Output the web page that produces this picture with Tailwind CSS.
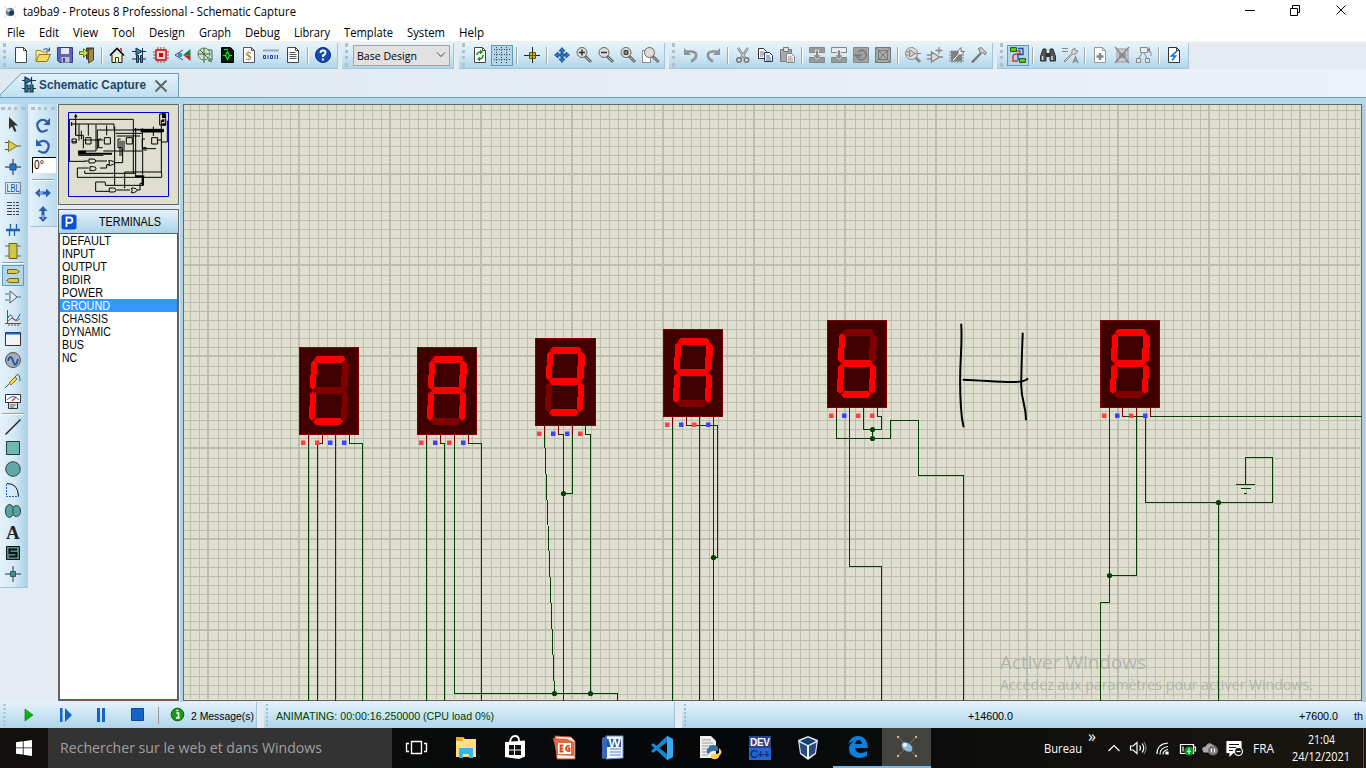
<!DOCTYPE html>
<html lang="fr">
<head>
<meta charset="utf-8">
<title>ta9ba9 - Proteus 8 Professional - Schematic Capture</title>
<script src="https://cdn.jsdelivr.net/npm/@tailwindcss/browser@4"></script>
</head>
<body class="w-[1366px] h-[768px] overflow-hidden bg-[#e4ebf2] font-['Open_Sans','Noto_Sans',sans-serif] text-xs text-black">
<div class="flex flex-col w-full h-full">

  <!-- Title bar -->
  <header class="flex h-6 items-center bg-white shrink-0 pb-px">
    <svg class="w-4 h-4 ml-[2px] mr-[5px]" viewBox="0 0 16 16"><path d="M2 2l12 12M14 2L2 14" stroke="#ddd2c0"/><circle cx="8" cy="8" r="4.3" fill="#5f7f99"/><circle cx="9.5" cy="9" r="2.5" fill="#263746"/><circle cx="6.5" cy="6.3" r="1.8" fill="#b5cedf"/></svg>
    <span data-w="273">ta9ba9 - Proteus 8 Professional - Schematic Capture</span>
    <svg class="ml-auto w-[126px] h-6 shrink-0" viewBox="1240 0 126 24" fill="none" stroke="#000"><path d="M1245 10.500h10M1290.500 8.500h7v7h-7zM1292.500 8v-2.500h7v7h-2M1336.500 5.500l9 9M1345.500 5.500l-9 9" /></svg>
  </header>
  <nav class="flex h-[17px] items-center bg-white shrink-0 pl-[7px] whitespace-nowrap" id="menu"></nav>
  <div class="h-[2px] bg-[#f0f0f0] shrink-0"></div>

  <!-- Toolbars -->
  <div class="flex h-[26px] shrink-0" id="toolbars"></div>

  <!-- Tab strip -->
  <div class="h-[28px] shrink-0 flex">
    <svg class="w-[1366px] h-[28px]" viewBox="0 69 1366 28"><defs><linearGradient id="tg" x2="0" y2="1"><stop stop-color="#e4f2fb"/><stop offset="1" stop-color="#bfdff0"/></linearGradient><linearGradient id="bgw"><stop stop-color="#e1e9f0"/><stop offset="1" stop-color="#ebf2f9"/></linearGradient></defs><rect y="69" width="1366" height="28" fill="url(#bgw)"/><path d="M0 97v-2l21-21.500h157.500V97" fill="url(#tg)" stroke="#6a9ebd"/>
      <g stroke="#17344d" stroke-width="1.200"><path d="M22 80.500h14M31.500 77v7M22 88.500h14"/><path d="M25 77v7l6-3.500z" fill="#2879ad"/><path d="M25 85h3v7h-3zM30 85h3v7h-3z" fill="#2879ad"/></g>
      <path d="M155.500 80.500l11 11M166.500 80.500l-11 11" stroke="#666" stroke-width="2"/>
      <text x="39" y="89" textLength="107" lengthAdjust="spacingAndGlyphs" font-family="Liberation Sans" font-weight="bold" font-size="12" fill="#1d4766">Schematic Capture</text></svg>
  </div>
  <div class="h-[7px] shrink-0 border-t border-[#6a9ebd] bg-[#b5d8eb]"></div>

  <!-- Work area -->
  <main class="flex h-[598px] shrink-0">
    <aside class="w-[28px] h-[484px] ml-0 bg-linear-to-r from-[#e4f2fb] via-[#d5e9f5] to-[#a9cfe6] border-b border-[#a3c5da] flex flex-col items-center pr-[2px] shrink-0" id="modes"></aside>
    <div class="w-[2px]"></div>
    <aside class="w-[27px] h-[123px] bg-linear-to-r from-[#e4f2fb] to-[#b9daed] border-b border-[#a3c5da] flex flex-col items-center shrink-0 pr-[2px]" id="rotation"></aside>
    <div class="w-[123px] ml-[1px] flex flex-col shrink-0 -mr-[1px]">
      <svg class="w-[121px] h-[101px] shrink-0" viewBox="174 12 363 303"><path d="M175.500 13.500h360v300h-360z" fill="#dfdfcf" stroke="#666" stroke-width="3"/><path d="M205.500 37.500h300v252h-300z" fill="none" stroke="#0000c8" stroke-width="3"/>
        <g fill="none" stroke="#000" stroke-width="3"><path d="M208 58H400V88H490M212 72H342V88M227 42v64M223 50h9M215 66v12M208 58V184h48M227 72V106h23V145M237 72V122M244 92V118M252 120h58M265 72v35M288 74V153H236V166H310M292 90h190M292 90v58M320 76v30M344 80V256M347 100h80M350 108h70M360 122v46M366 122v46M372 122v28M400 88V220M407 84V232M427 90V150H440M427 96h60M427 84v12M460 80v28M470 120h15M484 60V218M502 62V126H484M310 153H428V224M428 146h40M232 204h34M232 204V232H485V218M254 212V220H408M253 183h12M288 183h33M300 204h20V194h8M345 188h23V146M374 216V265M374 216h112M287 246h28M287 246V274h40M316 246v10h114V228M350 270h40M412 270h8V250h10"/>
        <path d="M257 113h16v19h-16zM313 113h18v19h-18zM379 113h18v19h-18zM455 113h18v19h-18zM296 117v26h12M296 117h8M354 117v26h12M354 117h8M427 117v26h12M427 117h8M216 117h13v12h-13zM216 125h13"/>
        <path d="M267 177h12q8 0 8 6t-8 6h-12zM270 200h10q8 0 8 6t-8 6h-10zM328 264h12q8 0 8 6t-8 6h-12zM326 182h6q10 1 12 6-3 7-12 8h-6q5-7 0-14zM394 264h6q10 1 12 6-3 7-12 8h-6q5-7 0-14z"/><path d="M479 42h18v33h-18z"/></g>
        <path d="M486 40h11v14h-11zM486 58h7v8h-7zM487 70h10v7h-10zM224 45h6v6h-6zM234 152h24v9h-24zM238 158h98v6h-98zM405 226h28v6h-28zM425 230h7v26h-7zM422 88h70v8h-70z"/></svg>
      <div class="h-[4px] shrink-0"></div>
      <div class="w-[121px] h-[492px] shrink-0 border border-[#666] bg-white flex flex-col">
        <div class="h-[23px] shrink-0 flex items-center bg-linear-to-b from-[#e4f2fb] to-[#acd3e8]">
          <svg class="w-4 h-4 ml-[2px]" viewBox="0 0 16 16"><rect x=".500" y=".500" width="15" height="15" rx="2.500" fill="#0b4fd4"/><path d="M5.500 13V3.500h3.200a2.700 2.700 0 0 1 0 5.400H5.500" fill="none" stroke="#fff" stroke-width="1.800"/></svg>
          <span data-w="62" class="ml-[22px] font-['Liberation_Sans',sans-serif] text-xs">TERMINALS</span>
        </div>
        <div class="flex-1 border border-[#1a6fb0] font-['Liberation_Sans',sans-serif] text-xs leading-[13px]" id="terms"></div>
      </div>
    </div>
    <div class="w-[3px] bg-[#b3d3e6] shrink-0"></div>
    <svg class="w-[1179px] h-[597px] shrink-0" viewBox="183 104 1179 597">
      <rect x="183" y="104" width="1179" height="597" fill="#666"/><rect x="184" y="105" width="1177" height="595" fill="#dfdfcf"/>
      <g id="grid" fill="#bcbdad" shape-rendering="crispEdges"></g>
      <g fill="#a9a9a9" fill-opacity=".8" font-family="Open Sans, sans-serif"><text x="1000" y="669" font-size="19" textLength="146" lengthAdjust="spacingAndGlyphs">Activer Windows</text><text x="1000" y="690" font-size="14" textLength="313" lengthAdjust="spacingAndGlyphs">Accédez aux paramètres pour activer Windows.</text></g>
      <g transform="translate(.5 .5)" fill="none" stroke="#004000" shape-rendering="crispEdges">
        <path d="M308 443V700M322 443H317V700M335 443V700M349 443H362V700M426 443V700M440 443H444V700M454 443V693H617V700M468 443H481V700"/>
        <path d="M544 434L554 693M558 434H563V700M572 434V493H563M585 434H590V693M672 425V700M686 425H717V557H713M699 425V700M713 425V700"/>
        <path d="M836 416V438H890V420H918V475H963V700M849 416V566H881V700M863 416V429H881V416H877M872 429V438"/>
        <path d="M1109 416V602H1100V700M1122 416H1145V502H1272V457H1245V484M1136 416V575H1109M1150 416H1361M1218 502V700M1235.500 484H1254.500M1240.500 488H1250.500M1243.500 493H1246.500"/>
      </g>
      <g id="dots" fill="#004000"></g>
      <g id="displays"></g>
      <g fill="none" stroke="#000" stroke-width="2" stroke-linecap="round" stroke-linejoin="round"><path d="M961.200 324.500Q962 335 960.700 360T961 408Q961.500 418 963.500 426.500M963.500 379.700C985 380.500 1005 382.800 1016 382S1025 380 1027.500 379M1022.700 333.500Q1021.500 362 1021.200 385C1021.500 402 1026 405 1026 419.500"/></g>
    </svg>
    <div class="flex-1 bg-[#b0cde1]"></div>
  </main>

  <!-- Status bar -->
  <footer class="flex h-[26px] shrink-0 font-['Liberation_Sans',sans-serif] text-[11.5px] bg-[#e4ebf2] whitespace-nowrap">
    <div class="flex items-center w-[257px] bg-linear-to-b from-[#e4f2fb] to-[#afd5ea] border-r border-[#a3c5da]">
      <svg class="w-[189px] h-[26px]" viewBox="0 702 189 26"><path d="M4.500 704v24" stroke="#a9bccb" stroke-width="2" stroke-dasharray="2 2"/><path d="M25 709v12l8-6z" fill="#10b010" stroke="#098a09" stroke-width=".700"/><g fill="#1764c8"><path d="M60 708h2.500v14H60zM65 708v14l7-7zM97 708h3v14h-3zM102 708h3v14h-3z"/><path d="M131.500 708.500h12v12h-12z" stroke="#0b4a9c"/></g><path d="M158.500 707v17" stroke="#999"/><circle cx="177.500" cy="714.500" r="6.300" fill="#199a12" stroke="#075c05"/><path d="M176.300 713h2.200v5h1.200M176 718h3M176.300 710.500h2" stroke="#fff" stroke-width="1.600" fill="none"/></svg>
      <span data-w="63" class="ml-[2px]">2 Message(s)</span>
    </div>
    <div class="w-[7px]"></div>
    <div class="flex items-center w-[411px] bg-linear-to-b from-[#e4f2fb] to-[#afd5ea] border-r border-[#a3c5da]">
      <i class="block h-[22px] ml-[2px] border-l-2 border-dotted border-[#a9bccb]"></i>
      <span data-w="218" class="ml-[8px] text-[#004000]">ANIMATING: 00:00:16.250000 (CPU load 0%)</span>
    </div>
    <div class="w-[7px]"></div>
    <div class="flex flex-1 items-center bg-linear-to-b from-[#e4f2fb] to-[#afd5ea]">
      <i class="block h-[22px] ml-[2px] border-l-2 border-dotted border-[#a9bccb]"></i>
      <span data-w="45" class="ml-[282px]">+14600.0</span>
      <span data-w="39" class="ml-[286px]">+7600.0</span>
      <span data-w="9" class="ml-[16px] text-[#000080]">th</span>
    </div>
  </footer>

  <!-- Windows taskbar -->
  <div class="flex h-10 shrink-0 items-center bg-linear-to-r from-[#12100d] via-[#050709] to-[#1b1710] text-white whitespace-nowrap">
    <div class="w-12 flex justify-center"><svg class="w-4 h-4" viewBox="0 0 16 16" fill="#fff"><path d="M0 2.300l6.800-1v6.200H0zM7.600 1.200L16 0v7.500H7.600zM0 8.300h6.800v6.300L0 13.700zM7.600 8.300H16V16l-8.400-1.200z"/></svg></div>
    <div class="w-[344px] h-10 bg-[#333] flex items-center pl-[12px] text-[#a0a0a0] text-[14.5px]"><span data-w="262">Rechercher sur le web et dans Windows</span></div>
    <div class="flex h-10" id="apps"></div>
    <div class="flex flex-1 items-center h-10">
      <span data-w="38" class="ml-[113px]">Bureau</span>
      <span class="ml-[6px] mb-[22px] w-[14px] text-[16px]">»</span>
      <svg class="w-[144px] h-6" viewBox="1102 736 144 24" fill="none" stroke="#fff" stroke-width="1.200"><path d="M1108.500 751l5.500-5.500 5.500 5.500"/><path d="M1130.500 746h2.500l4-3.500v11l-4-3.500h-2.500zM1139.500 745.500q2 2.500 0 5M1142 743.500q3.500 4.500 0 9"/><path d="M1144 742q4 6 0 12" stroke="#777"/><path d="M1157 754q0-10 11-11M1160 754.500q0-7 8-8M1163 754.500q0-4 5-5" /><path d="M1166 752h2v2h-2z" fill="#fff"/><path d="M1180.500 744.500h13v9h-13zM1194 747h1.500v4H1194M1183 746.500v5"/><circle cx="1189" cy="751" r="4" fill="#0a9a2a" stroke="#0a9a2a"/><path d="M1189 748v6M1187 751q2 2 4 0" stroke-width="1"/><path d="M1204 752q-3-5 2-5 2-5 6-2 3 0 3 4v3z" fill="#aaa" stroke="#aaa"/><circle cx="1213" cy="750.500" r="4.500" fill="#777" stroke="#777"/><path d="M1211.500 748.500v4M1214.500 748.500v4"/><path d="M1227 741.500h14v11h-8l-3 3v-3h-3z" fill="#fff"/><path d="M1229 744.500h10M1229 747.500h7M1229 750.500h4" stroke="#111"/><circle cx="1238.500" cy="751.500" r="4" fill="#111"/><path d="M1236.500 751.500h4"/></svg>
      <span data-w="21" class="ml-[7px]">FRA</span>
      <div class="flex flex-col items-center ml-[18px] leading-[17px] w-[58px]"><span data-w="27">21:04</span><span data-w="58">24/12/2021</span></div>
      <i class="block ml-auto mr-[2px] h-10 w-px bg-[#555]"></i>
    </div>
  </div>
</div>

<script>
const $ = id => document.getElementById(id);
const doc = (s = '#444', inner = '') => `<path d="M2.500.500h8l3 3v12h-11z" fill="#fff" stroke="${s}"/><path d="M10.500.500v3h3" fill="none" stroke="${s}"/>${inner}`;
const lens = (x, inner) => `<path d="M${9+x} 9l6 6" stroke="#666" stroke-width="3"/><path d="M${10+x} 10l4.500 4.500" stroke="#bbb"/><circle cx="${6+x}" cy="5.500" r="5" fill="#ddd" stroke="#666"/>${inner}`;
const ic = {
  new: doc(),
  open: '<path d="M1 14V3.500h5l1 1.500h5v3" fill="#f5e9a0" stroke="#a58b26"/><path d="M1 14.500l3-7h11.500l-3.500 7z" fill="#f6d95f" stroke="#8d7420"/><path d="M8 3q3-3 6 0M14.500.500V4H11" fill="none" stroke="#2b4f8d"/>',
  save: '<path d="M.500.500h15v15H3l-2.500-2z" fill="#6163b7" stroke="#393b88"/><path d="M4 1h8v6H4z" fill="#e7e7f3"/><path d="M4.500 10h8v5.500h-8z" fill="#bfc0d5"/><path d="M6 11h2v4H6z" fill="#40427e"/>',
  exit: '<path d="M7.500 1h7v11h-7z" fill="#555" stroke="#333"/><path d="M9.500 3l5-2v12l-5 3z" fill="#a38a4a" stroke="#554415"/><path d="M.500 4.500h4v-3L9 6l-4.500 4.500v-3h-4z" fill="#c4dd49" stroke="#668018"/>',
  home: '<path d="M3 8v7.500h10V8" fill="#fff3b3" stroke="#111"/><path d="M1 8.500l7-7 7 7" fill="none" stroke="#000" stroke-width="1.600"/><path d="M12 1v4" fill="none" stroke="#b22" stroke-width="1.500"/><path d="M6.500 15.500v-5h3v5" fill="#fff" stroke="#333"/>',
  schem: '<g stroke="#16304a"><path d="M1 4.500h14M11.500 1v7M1 12h14"/><path d="M5 1v7l6-3.500z" fill="#2f87c6"/><path d="M5.500 8.500h2v7h-2zM9.500 8.500h2v7h-2z" fill="#2f87c6"/></g>',
  pcb: '<path d="M5 0v16M8 0v16M11 0v16M0 5h16M0 8h16M0 11h16" stroke="#c33"/><path d="M3 3h10v10H3z" fill="#f9d9d5" stroke="#b11" stroke-width="1.400"/><path d="M6 6h4v4H6z" fill="#b11"/>',
  vis: '<path d="M8 3L0 8l8 5" fill="none" stroke="#447"/><circle cx="5" cy="8" r="2.300" fill="#39a"/><path d="M8 8l7.500-6v7z" fill="#17823a"/><path d="M8 8l7.500 6V9z" fill="#c22"/>',
  gerb: '<circle cx="7" cy="7" r="6" fill="#cfe1c8" stroke="#587f58"/><path d="M1 7h12M7 1v15M3 3l8 8M11 3h4v10M11 13l4 2" stroke="#3b6a46" fill="none"/><circle cx="13" cy="13" r="2" fill="#5a9a5a"/>',
  design: '<path d="M2.500.500h9l3 3v12h-12z" fill="#051c06" stroke="#000"/><path d="M4 8.500h2.500l2-4 2 4H13M6.500 8.500l2 4 2-4M5 2.500h4" stroke="#1be632" fill="none" stroke-width="1.200"/>',
  bill: doc('#555', '<text x="4.500" y="12.500" font-size="12" font-family="Liberation Serif" fill="#8a7c1a">$</text>'),
  code: '<path d="M0 3.500h16" stroke="#9fa6b6" stroke-width="2"/><path d="M.500 8.500h2v3h-2zM5 8v4M7.500 8.500h2v3h-2zM12 8v4M14.500 8v4" fill="none" stroke="#1b3fae"/>',
  note: doc('#444', '<path d="M4.500 5.500h6M4.500 7.500h7M4.500 9.500h7M4.500 11.500h7" stroke="#555"/>'),
  help: '<circle cx="8" cy="8" r="7.500" fill="#174bb4" stroke="#0d2a66"/><path d="M5.500 6Q5.500 3.500 8 3.500t2.500 2.300Q10.500 7.500 8 8.500V10M8 11.500v2" stroke="#fff" stroke-width="1.900" fill="none"/>',
  refresh: doc('#444', '<path d="M5 8q0-3 4-3M11 8q0 4-4 4" fill="none" stroke="#159415" stroke-width="1.600"/><path d="M8 2.500l3 2.500-3 2.500zM8 9.500L5 12l3 2.500z" fill="#159415"/>'),
  grid: '<path d="M0 2.500h16M0 7.500h16M0 12.500h16M2.500 0v16M7.500 0v16M12.500 0v16" stroke="#333" stroke-dasharray="1 1.500" stroke-opacity=".9"/>',
  origin: '<path d="M0 8.500h16M8.500 0v16" stroke="#222"/><path d="M5.500 5.500h6v6h-6z" fill="#c4b82e" stroke="#5b5410"/><path d="M8.500 5v7M5 8.500h7" stroke="#5b5410"/>',
  pan: '<path d="M8 .500l3 3.500H9v3h3V5l3.500 3-3.500 3V9H9v3h2l-3 3.500L5 12h2V9H4v2L.500 8 4 5v2h3V4H5z" fill="#2a78d0" stroke="#123f86" stroke-width=".800"/>',
  zin: lens(0, '<path d="M3 5.500h6M6 2.500v6" stroke="#333" stroke-width="1.500"/>'),
  zout: lens(0, '<path d="M3 5.500h6" stroke="#333" stroke-width="1.500"/>'),
  zall: lens(0, '<path d="M4 3.500h4v4H4z" fill="#777" stroke="#444"/>'),
  zarea: '<path d="M.500 3.500h8v12h-8z" fill="#fff" stroke="#333" stroke-dasharray="1 1"/>' + lens(1.500, ''),
  undo: '<path d="M4 4.500h4q6 0 5 5-1 3-5 5" fill="none" stroke="#8f9498" stroke-width="2.600"/><path d="M1 1v7h7z" fill="#8f9498"/>',
  redo: '<path d="M12 4.500H8q-6 0-5 5 1 3 5 5" fill="none" stroke="#8f9498" stroke-width="2.600"/><path d="M15 1v7H8z" fill="#8f9498"/>',
  cut: '<path d="M3 1l7 10M13 1L6 11" stroke="#777" stroke-width="2.200"/><path d="M3 1l7 10M13 1L6 11" stroke="#eee" stroke-width=".800"/><circle cx="4" cy="13" r="2.300" fill="none" stroke="#777" stroke-width="1.500"/><circle cx="11.500" cy="13" r="2.300" fill="none" stroke="#777" stroke-width="1.500"/>',
  copy: '<path d="M1.500 1.500h5l3 3v7h-8z" fill="#fff" stroke="#333"/><path d="M3 5h4M3 7h4M3 9h3" stroke="#777"/><path d="M7.500 5.500h5l3 3v6h-8z" fill="#fff" stroke="#223459"/><path d="M9 9h4M9 11h5M9 13h5" stroke="#567"/>',
  paste: '<path d="M1.500 2.500h11v12h-11z" fill="#aaa" stroke="#777"/><path d="M4.500.500h5v4h-5z" fill="#ddd" stroke="#777"/><path d="M7.500 6.500h5l3 3v6h-8z" fill="#eee" stroke="#888"/><path d="M9 10h4M9 12h5M9 14h5" stroke="#999"/>',
  bcopy: '<path d="M.500.500h15v5H.500zM.500 10.500h15v5H.500z" fill="#999" stroke="#888"/><path d="M6.500 3h3v5h3L8 12.500 3.500 8h3z" fill="#888" stroke="#eee" stroke-width=".800"/>',
  bmove: '<path d="M.500.500h15v5H.500z" fill="#e6eef4" stroke="#888"/><path d="M.500 10.500h15v5H.500z" fill="#999" stroke="#888"/><path d="M6.500 3h3v5h3L8 12.500 3.500 8h3z" fill="#888" stroke="#eee" stroke-width=".800"/>',
  brot: '<path d="M.500.500h15v15H.500z" fill="#a3a3a3" stroke="#888"/><path d="M5 5q4-4 7 0t-1 7-6-1M2 8h6L5 11z" fill="none" stroke="#777" stroke-width="1.400"/>',
  bdel: '<path d="M.500.500h15v15H.500z" fill="#aaa" stroke="#777"/><path d="M1 1l14 14M15 1L1 15M3.500 3.500h9v9h-9z" fill="none" stroke="#777"/>',
  pick: '<path d="M10 10l5 5" stroke="#888" stroke-width="3"/><circle cx="6.500" cy="6.500" r="6" fill="#ddd" stroke="#888"/><path d="M4.500 3v7l6-3.500zM1 5h3M1 8h3M10 6.500h6" fill="#ccc" stroke="#888"/>',
  make: '<path d="M4.500 5v10l8-5zM0 8h4M0 12h4M12 10h4M12 0v7M8.500 3.500h7" fill="#ddd" stroke="#888" stroke-width="1.300"/>',
  pack: '<path d="M3 3v13M6 3v13M9 3v13M12 3v13M0 5h15M0 8h15M0 11h15M0 14h15" stroke="#888"/><path d="M2 4h11v10H2z" fill="#808080"/><path d="M3 13l6-6V3.500L12 .500v4h3.500l-3 3.500H10l-5.500 6.500z" fill="#eee" stroke="#777"/>',
  hammer: '<path d="M1 15.500L10 6" stroke="#777" stroke-width="2.500"/><path d="M7.500 1.500l3-1 2.500 3 2.500 2-1.500 2.500-2-2.500-2.500 1z" fill="#ccc" stroke="#777"/>',
  auto: '<path d="M3 10q0-3 4-3h3V4H7M3 9v5h5" fill="none" stroke="#d32" stroke-width="1.400"/><path d="M8 1.500h5v6H8v5h3" fill="none" stroke="#1a55b5" stroke-width="1.400"/><path d="M.500.500h6v4h-6zM9.500 11.500h6v4h-6z" fill="#5fc021" stroke="#246010"/>',
  find: '<path d="M1 8l2-6h3v12H.500V9zM15 8l-2-6h-3v12h5.500V9z" fill="#555" stroke="#333"/><path d="M6 6h4v4H6z" fill="#333"/><path d="M2.500 9v4M12 9v4" stroke="#ddd" stroke-width="1.500"/>',
  prop: '<path d="M0 1.500h6M0 4.500h6" stroke="#888"/><path d="M2 14l8-8V3l3-2v3h3l-2 3h-3l-8 8z" fill="#ddd" stroke="#888"/><path d="M11 16l2.500-6 2.500 6M12 14h3" stroke="#888" fill="none" stroke-width="1.400"/>',
  addsh: doc('#999', '<path d="M8 6v7M4.500 9.500h7" stroke="#888" stroke-width="2.500"/>'),
  delsh: '<path d="M3 2h11v13H3z" fill="#ccc" stroke="#999"/><path d="M5 6h7v5H5z" fill="#999"/><path d="M1 0l14 16M15 0L1 16" stroke="#888" stroke-width="1.400"/>',
  hier: '<path d="M4.500.500h7v5h-7zM.500 11.500h4v4h-4zM9.500 11.500h4v4h-4zM6 6l-3 5M8 6l3 5M11 3q5 0 4 6" fill="#eee" fill-opacity=".5" stroke="#888"/><path d="M11 3l3-3v6z" fill="#888"/>',
  elec: doc('#333', '<path d="M11 4L5.500 9h4L6 13.500" fill="none" stroke="#1670c8" stroke-width="1.600"/>'),
  sel: '<path d="M4 0v12l3-2.500L9.500 15l2-1L9 8.500h4z" fill="#333"/>',
  comp: '<path d="M0 4.500h4M0 11.500h4M12 8h4" stroke="#555"/><path d="M3.500 2.500v11L12 8z" fill="#d6cc51" stroke="#7f772a"/>',
  junc: '<path d="M0 8h16M8 0v16" stroke="#123"/><path d="M5 5h6v6H5z" fill="#2876c8" stroke="#124a80"/>',
  lbl: '<path d="M.500 2.500h15v11H.500z" fill="none" stroke="#333" stroke-dasharray="1 1"/><text x="1.500" y="11.500" font-size="10" textLength="13" lengthAdjust="spacingAndGlyphs" font-family="Liberation Sans" fill="#0a4fa0">LBL</text>',
  script: '<path d="M2 1.500h12M2 4.500h12M2 7.500h12M2 10.500h12M2 13.500h12" stroke="#444" stroke-dasharray="5 1 2 1"/>',
  bus: '<path d="M1 8h14" stroke="#1764b8" stroke-width="2.500"/><path d="M5.500 2v6M11.500 2v6M4.500 8v6M9.500 8v6" stroke="#1764b8" stroke-width="1.300" fill="none"/>',
  sub: '<path d="M0 3h16M0 13h16" stroke="#666"/><path d="M4 .500h8v15H4z" fill="#cfc648" stroke="#67601a"/>',
  term: '<path d="M2.500 1.500h9l3 2-3 2h-9zM13.500 10.500H4.500l-3 2 3 2h9z" fill="#d6cb46" stroke="#6b641e"/>',
  pin: '<path d="M0 5h4M0 11h4M12 8h4" stroke="#2b8a8a"/><path d="M5 2v12l7-6z" fill="#e8f3f5" stroke="#555"/>',
  graph: '<path d="M2.500 0v14M0 13.500h16M4 13v3M7 13v3M10 13v3M13 13v3" stroke="#555"/><path d="M3 8q2-6 5 0t7-4" fill="none" stroke="#1764c8"/><path d="M3 11l4-3 4 3 4-2" fill="none" stroke="#c42"/>',
  tape: '<path d="M.500 1.500h15v13H.500z" fill="#f3f3f3" stroke="#333"/><path d="M1 2.500h14" stroke="#1764c8" stroke-width="2"/>',
  gen: '<circle cx="8" cy="8" r="7.500" fill="#a7adb6" stroke="#555"/><path d="M3 9q2.500-8 5 0t5-2" fill="none" stroke="#1654a8" stroke-width="1.800"/>',
  probe: '<path d="M0 15l4-4M10 4q4-6 5 2v2" fill="none" stroke="#555"/><path d="M4 10l6-6 2 2-6 6z" fill="#eddf3a" stroke="#777421"/>',
  meter: '<path d="M.500.500h15v8H.500z" fill="#fff" stroke="#333"/><path d="M2 6q6-7 12 0" fill="none" stroke="#1764c8"/><path d="M7 7l4-4" stroke="#d32" stroke-width="1.500"/><path d="M3.500 8.500h9v6h-9z" fill="#ddd" stroke="#333"/><path d="M5 11h5M5 13h4" stroke="#666"/><circle cx="10.500" cy="11" r="1" fill="#dc0"/>',
  line: '<path d="M.500 15.500l15-15" stroke="#222" stroke-width="1.400"/>',
  box: '<path d="M1.500 1.500h13v13h-13z" fill="#72b6b2" stroke="#223f3e"/>',
  circ: '<circle cx="8" cy="8" r="7.300" fill="#62a7a3" stroke="#2f4b4a"/>',
  arc: '<path d="M1.500 2v12.500H14" fill="none" stroke="#1764c8" stroke-dasharray="2 1"/><path d="M2 1.500q11 0 11.500 12.500" fill="none" stroke="#111"/>',
  path: '<path d="M8 4.500Q7 1.500 4.500 1.500 .500 2 .500 8t4 6.500Q7 14 8 11.500q1 2 3.500 2 4-.500 4-5.500t-4-5.500Q9 2.500 8 4.500z" fill="#5ca39f" stroke="#284341"/><path d="M8 5v6" stroke="#284341"/>',
  text: '<text x="1" y="14.500" font-size="19" font-weight="bold" font-family="Liberation Serif" fill="#222">A</text>',
  sym: '<path d="M1.500 1.500h13v13h-13z" fill="#4a958b" stroke="#111"/><path d="M12 4.500H4.500V8h7v3.500H4" fill="none" stroke="#111" stroke-width="2"/>',
  mark: '<path d="M0 8h16M8 0v16" stroke="#333"/><path d="M5.500 5.500h5v5h-5z" fill="#3f8f91" stroke="#2b5d5e"/>',
  cw: '<path d="M12 4.500Q8 1.500 4.500 4T3 11t5.500 3.500 4-2" fill="none" stroke="#2d5eac" stroke-width="2.200"/><path d="M15 1v7H8.500z" fill="#2d5eac"/>',
  ccw: '<path d="M4 4.500Q8 1.500 11.500 4T13 11t-5.500 3.500-4-2" fill="none" stroke="#2d5eac" stroke-width="2.200"/><path d="M1 1v7h6.500z" fill="#2d5eac"/>',
  hflip: '<path d="M0 8l5-4.500v3h6v-3L16 8l-5 4.500v-3H5v3z" fill="#2d5eac"/><path d="M5 7h3v2H5L3 8z" fill="#7ea3da"/>',
  vflip: '<path d="M8 0l4.500 5h-3v6h3L8 16l-4.500-5h3V5h-3z" fill="#2d5eac"/><path d="M7 9h2v3l-1 1.500L7 12z" fill="#7ea3da"/>'
};
const svg = n => `<svg class="w-4 h-4 overflow-visible" viewBox="0 0 16 16">${ic[n]}</svg>`;
const on = 'border border-[#5f9bbd] bg-[#b5d6e9]';

$('menu').innerHTML = [['File',18],['Edit',20],['View',25],['Tool',23],['Design',36],['Graph',32],['Debug',35],['Library',36],['Template',49],['System',38],['Help',25]]
  .map(([t, w]) => `<span data-w="${w}">${t}</span><i class="w-[14px] shrink-0"></i>`).join('');

const slot = n => n === '|' ? '<i class="w-2 h-[17px] flex justify-center"><b class="w-[2px] bg-[#a6a6a6] border-r border-white"></b></i>'
  : n[0] === '*' ? `<span class="w-[22px] h-[21px] flex items-center justify-center ${on}">${svg(n.slice(1))}</span>`
  : `<span class="w-[22px] h-[22px] flex items-center justify-center">${svg(n)}</span>`;
const handle = '<i class="h-[24px] w-[3px] border-l-[3px] border-dotted border-[#b0bfcb]"></i>';
const bar = (cls, inner) => `<div class="flex items-center h-[26px] pb-px shrink-0 border-r border-b border-[#a3c5da] bg-linear-to-b from-[#e6f3fb] via-[#d3e8f4] to-[#afd5ea] ${cls}">${inner}</div>`;
const row = s => s.split(' ').map(slot).join('');
$('toolbars').innerHTML =
  bar('w-[338px] pl-[3px] mr-1', handle + '<i class="w-[4px]"></i>' + row('new open save exit | home schem pcb vis gerb design bill code note | help')) +
  bar('w-[112px] pl-[3px] mr-[5px]', handle + '<div class="ml-[5px] w-[97px] h-[21px] border border-[#a5a5a5] bg-[#e1e1e1] flex items-center pl-[3px] whitespace-nowrap"><span class="text-[11.5px] mt-px" data-w="60">Base Design</span><svg class="w-[10px] h-[6px] ml-auto mr-[3px]" viewBox="0 0 10 6"><path d="M1 .500l4 4 4-4" fill="none" stroke="#444"/></svg></div>') +
  bar('w-[206px] pl-[3px] mr-1', handle + '<i class="w-[4px]"></i>' + row('refresh *grid | origin | pan zin zout zall zarea')) +
  bar('w-[324px] pl-[3px] mr-1', handle + '<i class="w-[5px]"></i>' + row('undo redo | cut copy paste | bcopy bmove brot bdel | pick make pack hammer')) +
  bar('w-[192px] pl-[3px]', handle + '<i class="w-[4px]"></i>' + row('*auto | find prop | addsh delsh hier | elec'));

const vslot = n => n === '|' ? '<i class="h-1 w-[22px] shrink-0 flex items-center"><b class="w-full h-[2px] bg-[#9c9c9c] border-b border-white"></b></i>'
  : n[0] === '*' ? `<span class="w-[22px] h-[21px] shrink-0 flex items-center justify-center ${on}">${svg(n.slice(1))}</span>`
  : `<span class="w-[22px] h-[21px] shrink-0 flex items-center justify-center">${svg(n)}</span>`;
const col = s => s.split(' ').map(vslot).join('');
const vhandle = '<i class="w-[24px] mt-[3px] mb-[4px] h-[3px] shrink-0 border-t-[3px] border-dotted border-[#b0bfcb]"></i>';
$('modes').innerHTML = vhandle + col('sel comp junc lbl script bus sub | *term pin graph tape gen probe meter | line box circ arc path text sym mark');
$('rotation').innerHTML = vhandle + col('cw ccw') + '<div class="w-[24px] h-4 ml-[2px] mt-px mb-[5px] shrink-0 bg-white border-t border-l border-black leading-[15px] pl-px"><span data-w="10" data-h="14">0°</span></div>' + vslot('|') + col('hflip vflip');

$('terms').innerHTML = [['DEFAULT',49],['INPUT',33],['OUTPUT',45],['BIDIR',29],['POWER',41],['GROUND',48],['CHASSIS',46],['DYNAMIC',49],['BUS',22],['NC',15]]
  .map(([t, w]) => `<div class="h-[13px] pl-[2px] ${t === 'GROUND' ? 'bg-[#3399ff] text-white' : ''}"><span data-w="${w}" data-h="13">${t}</span></div>`).join('');

/* Sheet grid: ten minor cells for each major one */
let g = '';
const clipX = (x, w) => { if (x >= 184 && x < 1360) g += `<rect x="${x}" y="105" width="${w}" height="594"/>`; };
const clipY = (y, h) => { if (y >= 105 && y < 699) g += `<rect x="184" y="${y}" width="1176" height="${h}"/>`; };
for (let X = 117; X < 1361; X += 91) for (let k = 0; k < 10; k++) k ? clipX(X + Math.ceil(9.1 * k), 1) : clipX(X - 1, 2);
[82, 174, 265, 356, 448, 539, 630].forEach(Y => { for (let k = 0; k < 10; k++) k ? clipY(Y + Math.ceil(9.05 * k), 1) : clipY(Y - 1, 2); });
$('grid').innerHTML = g;

$('dots').innerHTML = [[554,693],[590,693],[563,493],[713,557],[872,429],[872,438],[1109,575],[1218,502]].map(([x, y]) => `<circle cx="${x + .5}" cy="${y + .5}" r="2.600"/>`).join('');

/* Seven-segment displays */
const seg = {
  a: '15,12 18,9 44,9 46,11 46,13 43,16 18,16', f: '12,16 15,13 18,16 18,28 17,28 17,40 14,43 11,40 11,28 12,28',
  b: '43,16 46,13 50,17 50,28 49,28 49,40 46,43 42,40 42,28 43,28', g: '14,43.500 17,40 43,40 46,43.500 43,47 17,47',
  e: '11,47 14,44 17,47 17,59 16,59 16,71 13,74 10,71 10,59 11,59', c: '43,47 46,44 49,47 49,59 48,59 48,71 45,74 42,71 42,59 43,59',
  d: '14,75 17,71 41,71 44,74 41,78 17,78'
};
$('displays').innerHTML = [
  [299,347,'afed',[308,322,335,349],'rrbb'], [417,347,'abcefg',[426,440,454,468],'rbrb'], [535,338,'abcdfg',[544,558,572,585],'rbbr',61],
  [663,329,'abcefg',[672,686,699,713],'rbrb'], [827,320,'fgecd',[836,849,863,877],'rbrr'], [1100,320,'abcefg',[1109,1122,1136,1150],'rbrb']
].map(([x, y, lit, pins, st, w = 60]) =>
  `<rect x="${x + .5}" y="${y + .5}" width="${w - 1}" height="87" fill="#400000" stroke="#800000"/><g transform="translate(${x} ${y})">` +
  Object.entries(seg).map(([k, p]) => `<polygon points="${p}" fill="${lit.includes(k) ? '#f00' : '#800000'}"/>`).join('') + '</g>' +
  pins.map((p, i) => `<rect x="${p}" y="${y + 88}" width="1" height="9" fill="#800000"/><rect x="${p - 7}" y="${y + 93.5}" width="4.500" height="4.500" fill="${st[i] === 'r' ? '#ff4040' : '#4040ff'}"/>`).join('')).join('');

/* Taskbar applications */
const app = {
  tasks: '<path d="M8.500 7.500h10v12h-10zM6 9.500H3.500v8H6M21 9.500h2.500v8H21" fill="none" stroke="#fff" stroke-width="1.300"/>',
  files: '<path d="M4 3h7l2 2h11v18H4z" fill="#ffdf80"/><path d="M4 3h7v4H4z" fill="#e6aa2c"/><path d="M7 14h14v10h-4v-4h-6v4H7z" fill="#31b7e8"/>',
  store: '<path d="M4 8l20-1.500v16L18 25l-14-2z" fill="#fff"/><path d="M9 8q1-6 5-6t4 5" fill="none" stroke="#fff" stroke-width="1.800"/><path d="M8 11h5v4.500H8zM14 11h6v4.500h-6zM8 16.500h5V21H8zM14 16.500h6V21h-6z" fill="#111"/>',
  ppt: '<path d="M5 2l16 1 4 4v18l-18 0z" fill="#eee" stroke="#bd4a25"/><path d="M3 4l14 1 7 3v14l-17-1z" fill="#e2693a"/><path d="M8 9h13v11H8z" fill="#fff"/><path d="M13.500 11.500h-3v6h3M10.500 14.500h2.500" fill="none" stroke="#d24a1b" stroke-width="1.800"/><path d="M19.500 12q-3.500-.500-3.500 2.500t3.500 2.500v-2.500h-2" fill="none" stroke="#d24a1b" stroke-width="1.800"/>',
  word: '<path d="M7 2h17v22l-17 1z" fill="#eef3fc" stroke="#6d91ca"/><path d="M11 15h11M11 18h11M11 21h11" stroke="#5d83bd"/><path d="M3 4l5-2v22l-5 1z" fill="#3a68b4"/><path d="M8 5h14v8H8z" fill="#2a5699"/><text x="9.500" y="13" font-size="10" textLength="12" lengthAdjust="spacingAndGlyphs" font-weight="bold" fill="#fff" font-family="Liberation Sans">W</text>',
  code: '<path d="M19 2l6 3v18l-6 3L3 11l2-2 14 11V8L5 19l-2-2z" fill="#1687d3"/><path d="M19 2l6 3v18l-6 3z" fill="#37a8f1"/>',
  py: '<path d="M3 2h11l5 5v17H3z" fill="#eee"/><path d="M5 6h9M5 9h11M5 12h8M5 15h6M5 18h6M5 21h6" stroke="#999"/><path d="M12 20v-7q0-2 4-2t5 2v4h-5q-3 0-4 3-3-1-2-4t2-2z" fill="#32709f"/><path d="M22 14v4q0 2-4 2h-4v4q5 3 8-1v-1q5-4 0-8z" fill="#ffd443"/>',
  dev: '<path d="M3 2h22v24H3z" fill="#2467cf"/><path d="M3 2h22v12H3z" fill="#303f83"/><text x="4" y="12" font-size="10" textLength="20" font-weight="bold" fill="#fff" font-family="Liberation Sans">DEV</text><text x="4" y="24" font-size="11" textLength="20" font-weight="bold" fill="#0c2f80" font-family="Liberation Sans">C++</text>',
  vbox: '<path d="M13 2l10 4-2 14-8 6-8-6L3 6z" fill="#dce6ef"/><path d="M13 3.500L21 7l-8 4-8-4z" fill="#173c73"/><path d="M4.500 8.500L12 12v11l-6-4zM21.500 8.500L14 12v11l6-4z" fill="#274a80"/><path d="M13 12v13" stroke="#fff"/>',
  edge: '<path d="M4 12Q6 3 14 3q9 0 10 12H11q1 5 6 5 3 0 6-2v5q-4 2-8 2-10-1-10-9 0-5 5-8-5 1-6 4zm7-1h7q-1-4-3.500-4T11 11z" fill="#0b80dc"/>',
  proteus: '<path d="M5 4l18 19M23 4L5 23" stroke="#a78868" stroke-dasharray="2 1"/><g fill="#d7b58c"><circle cx="5" cy="4" r="1.200"/><circle cx="23" cy="4" r="1.200"/><circle cx="5" cy="23" r="1.200"/><circle cx="23" cy="23" r="1.200"/></g><ellipse cx="14" cy="14" rx="6" ry="4" fill="#8bb8d8" transform="rotate(35 14 14)"/><circle cx="12" cy="12" r="2" fill="#e8f7ff"/>'
};
$('apps').innerHTML = Object.entries(app).map(([n, p]) => `<span class="w-[49px] h-10 flex items-center justify-center ${n === 'proteus' ? 'bg-[#42423f] border-b-2 border-[#76b9ed]' : n === 'edge' ? 'border-b-2 border-[#76b9ed]' : ''}"><svg class="w-7 h-7" viewBox="0 0 28 28">${p}</svg></span>`).join('');

/* Labels are set to their nominal width */
document.querySelectorAll('[data-w]').forEach(e => {
  const w = e.dataset.w, h = e.dataset.h || 17, t = e.textContent;
  e.innerHTML = `<svg class="block overflow-visible" width="${w}" height="${h}"><text x="0" y="${h > 15 ? 13 : 11}" fill="currentColor" textLength="${w}" lengthAdjust="spacingAndGlyphs"></text></svg>`;
  e.querySelector('text').textContent = t;
});
</script>
</body>
</html>
